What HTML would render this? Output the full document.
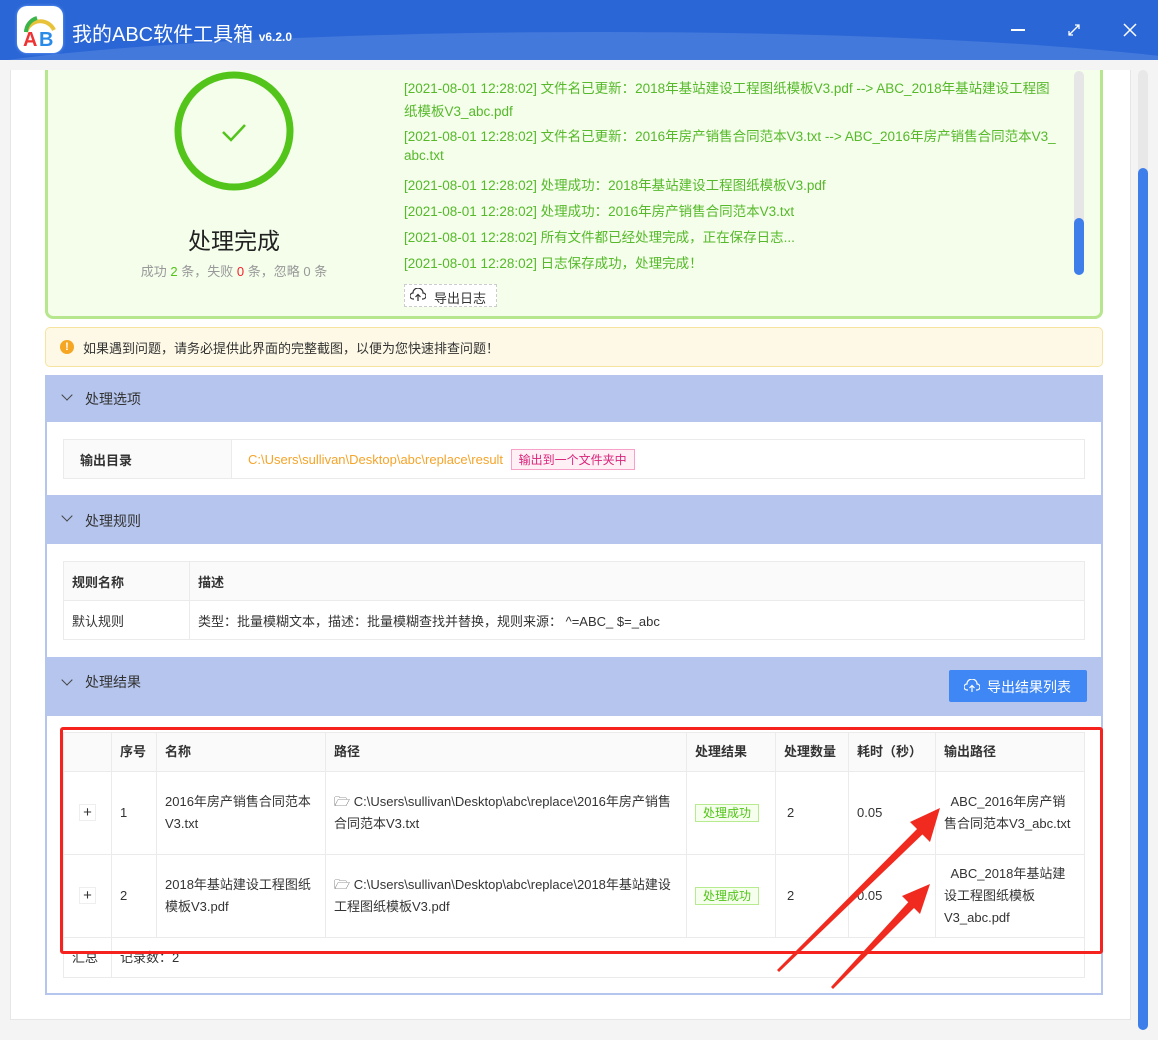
<!DOCTYPE html>
<html><head><meta charset="utf-8"><style>
*{box-sizing:border-box;margin:0;padding:0}
body{width:1158px;height:1040px;overflow:hidden;background:#f4f4f4;font-family:"Liberation Sans","Noto Sans CJK SC",sans-serif;font-size:13px;color:#333;position:relative}
.abs{position:absolute}
.title{left:0;top:0;width:1158px;height:60px;background:#2a66d5;overflow:hidden}
.title .wave{left:-100px;top:32px;width:1400px;height:120px;border-radius:50%;background:#4479dc}
.logo{left:17px;top:6px;width:46px;height:47px;border-radius:10px;background:#fff;box-shadow:0 0 3px #6aa0ff}
.main{left:10px;top:70px;width:1121px;height:950px;background:#fff;border:1px solid #e6e6e6;border-top:none}
.green{left:45px;top:70px;width:1058px;height:249px;background:#f4feeb;border:3px solid #b6e78e;border-top:none;border-radius:0 0 8px 8px}
.log{left:404px;color:#56b92a;font-size:13.5px;white-space:nowrap}
.sec{left:45px;width:1058px;background:#b5c5ee;color:#333;font-size:14px}
.sec span{position:absolute;left:40px}
.chev{position:absolute;left:18px;width:8px;height:8px;border-right:1.3px solid #444;border-bottom:1.3px solid #444;transform:rotate(45deg)}
table{border-collapse:collapse;position:absolute}
td,th{border:1px solid #ebebeb;text-align:left;font-size:13px;vertical-align:middle}
th{background:#fafafa;font-weight:bold;color:#333}
</style></head><body>
<div class="abs title"><div class="abs wave"></div>
<div class="abs logo"><svg width="46" height="47"><path d="M9 26 A15 15 0 0 1 37 24" stroke="#e8c33a" stroke-width="4" fill="none"/><path d="M9 26 A15 15 0 0 1 20 12" stroke="#3bb44a" stroke-width="4" fill="none"/><text x="6" y="40" font-size="20" font-weight="bold" fill="#e33" font-family="Liberation Sans">A</text><text x="22" y="40" font-size="20" font-weight="bold" fill="#2a8ae8" font-family="Liberation Sans">B</text></svg></div>
<div class="abs" style="left:72px;top:18px;color:#fff;font-size:20px">我的ABC软件工具箱 <span style="font-size:12px;font-weight:bold">v6.2.0</span></div>
<div class="abs" style="left:1011px;top:29px;width:14px;height:1.5px;background:#fff"></div>
<svg class="abs" style="left:1066px;top:22px" width="16" height="16"><path d="M3 13 L13 3 M9 3 H13 V7 M3 9 V13 H7" stroke="#fff" stroke-width="1.3" fill="none"/></svg>
<svg class="abs" style="left:1123px;top:23px" width="14" height="14"><path d="M1 1 L13 13 M13 1 L1 13" stroke="#fff" stroke-width="1.5"/></svg>
</div>
<div class="abs main"></div>
<div class="abs" style="left:1138px;top:70px;width:10px;height:960px;background:#e8e8e8;border-radius:5px"></div>
<div class="abs" style="left:1138px;top:168px;width:10px;height:862px;background:#3d7eea;border-radius:5px"></div>
<div class="abs green"></div>
<svg class="abs" style="left:172px;top:69px" width="124" height="124"><circle cx="62" cy="62" r="56" stroke="#52c41a" stroke-width="7" fill="none"/><path d="M51 63 L59 71 L73 56" stroke="#52c41a" stroke-width="2.5" fill="none"/></svg>
<div class="abs" style="left:134px;top:222px;width:200px;text-align:center;font-size:23px;color:#222">处理完成</div>
<div class="abs" style="left:134px;top:261px;width:200px;text-align:center;font-size:13px;color:#999">成功 <span style="color:#52c41a">2</span> 条，失败 <span style="color:#f5222d">0</span> 条，忽略 0 条</div>
<div class="abs log" style="top:77px">[2021-08-01 12:28:02] 文件名已更新：2018年基站建设工程图纸模板V3.pdf --&gt; ABC_2018年基站建设工程图</div>
<div class="abs log" style="top:100px">纸模板V3_abc.pdf</div>
<div class="abs log" style="top:125px">[2021-08-01 12:28:02] 文件名已更新：2016年房产销售合同范本V3.txt --&gt; ABC_2016年房产销售合同范本V3_</div>
<div class="abs log" style="top:148px">abc.txt</div>
<div class="abs log" style="top:174px">[2021-08-01 12:28:02] 处理成功：2018年基站建设工程图纸模板V3.pdf</div>
<div class="abs log" style="top:200px">[2021-08-01 12:28:02] 处理成功：2016年房产销售合同范本V3.txt</div>
<div class="abs log" style="top:226px">[2021-08-01 12:28:02] 所有文件都已经处理完成，正在保存日志...</div>
<div class="abs log" style="top:252px">[2021-08-01 12:28:02] 日志保存成功，处理完成！</div>
<div class="abs" style="left:1074px;top:71px;width:10px;height:204px;background:#e6e6e6;border-radius:5px"></div>
<div class="abs" style="left:1074px;top:218px;width:10px;height:57px;background:#3d7eea;border-radius:5px"></div>
<div class="abs" style="left:404px;top:284px;width:93px;height:23px;border:1px dashed #ccc;background:#fff;font-size:13px;padding:3px 0 0 29px;color:#333">导出日志</div>
<svg class="abs" style="left:410px;top:288px" width="16" height="14"><path d="M4 11 H3 A3 3 0 0 1 3 5 A5 5 0 0 1 13 5 A3 3 0 0 1 13 11 H12 M8 13 V7 M5.5 9 L8 6.5 L10.5 9" stroke="#333" stroke-width="1.2" fill="none"/></svg>
<div class="abs" style="left:45px;top:327px;width:1058px;height:40px;background:#fdf9e6;border:1px solid #f7e3a0;border-radius:5px"></div>
<div class="abs" style="left:60px;top:340px;width:14px;height:14px;border-radius:50%;background:#f5a623;color:#fff;font-size:11px;font-weight:bold;text-align:center;line-height:14px">!</div>
<div class="abs" style="left:83px;top:338px;font-size:13px;color:#333">如果遇到问题，请务必提供此界面的完整截图，以便为您快速排查问题！</div>
<div class="abs" style="left:45px;top:375px;width:1058px;height:620px;border:2px solid #b5c5ee;border-top:none;background:#fff"></div>
<div class="abs sec" style="top:375px;height:47px"><i class="chev" style="top:16px"></i><span style="top:14px">处理选项</span></div>
<table style="left:63px;top:439px;width:1022px;height:40px"><tr><th style="width:168px;background:#fafafa;padding-left:16px">输出目录</th><td style="padding-left:16px;color:#f5a42a">C:\Users\sullivan\Desktop\abc\replace\result <span style="display:inline-block;margin-left:4px;border:1px solid #f7a0c8;background:#fff0f6;color:#d9237a;font-size:12px;padding:1px 7px">输出到一个文件夹中</span></td></tr></table>
<div class="abs sec" style="top:495px;height:49px"><i class="chev" style="top:17px"></i><span style="top:16px">处理规则</span></div>
<table style="left:63px;top:561px;width:1022px;height:79px"><tr style="height:39px"><th style="width:126px;padding-left:8px">规则名称</th><th style="padding-left:8px">描述</th></tr><tr><td style="padding-left:8px">默认规则</td><td style="padding-left:8px">类型：批量模糊文本，描述：批量模糊查找并替换，规则来源： ^=ABC_ $=_abc</td></tr></table>
<div class="abs sec" style="top:657px;height:59px"><i class="chev" style="top:19px"></i><span style="top:15px">处理结果</span></div>
<div class="abs" style="left:949px;top:670px;width:138px;height:32px;background:#3f87f5;border-radius:2px;color:#fff;font-size:14px;padding:7px 0 0 38px">导出结果列表</div>
<svg class="abs" style="left:964px;top:679px" width="16" height="14"><path d="M4 11 H3 A3 3 0 0 1 3 5 A5 5 0 0 1 13 5 A3 3 0 0 1 13 11 H12 M8 13 V7 M5.5 9 L8 6.5 L10.5 9" stroke="#fff" stroke-width="1.2" fill="none"/></svg>
<table style="left:63px;top:732px;width:1022px;line-height:22px">
<tr style="height:39px"><th style="width:48px"></th><th style="width:45px;padding-left:8px">序号</th><th style="width:169px;padding-left:8px">名称</th><th style="width:361px;padding-left:8px">路径</th><th style="width:89px;padding-left:8px">处理结果</th><th style="width:73px;padding-left:8px">处理数量</th><th style="width:87px;padding-left:8px">耗时（秒）</th><th style="padding-left:8px">输出路径</th></tr>
<tr style="height:83px"><td style="text-align:center"><span style="display:inline-block;width:17px;height:17px;border:1px solid #eee;line-height:15px;font-size:15px">+</span></td><td style="padding-left:8px">1</td><td style="padding:0 8px">2016年房产销售合同范本V3.txt</td><td style="padding:0 8px">🗁 C:\Users\sullivan\Desktop\abc\replace\2016年房产销售合同范本V3.txt</td><td style="padding-left:8px"><span style="border:1px solid #b7eb8f;background:#f6ffed;color:#52c41a;font-size:12px;padding:1px 7px">处理成功</span></td><td style="padding-left:11px">2</td><td style="padding-left:8px">0.05</td><td style="padding:0 8px">&nbsp; ABC_2016年房产销售合同范本V3_abc.txt</td></tr>
<tr style="height:83px"><td style="text-align:center"><span style="display:inline-block;width:17px;height:17px;border:1px solid #eee;line-height:15px;font-size:15px">+</span></td><td style="padding-left:8px">2</td><td style="padding:0 8px">2018年基站建设工程图纸模板V3.pdf</td><td style="padding:0 8px">🗁 C:\Users\sullivan\Desktop\abc\replace\2018年基站建设工程图纸模板V3.pdf</td><td style="padding-left:8px"><span style="border:1px solid #b7eb8f;background:#f6ffed;color:#52c41a;font-size:12px;padding:1px 7px">处理成功</span></td><td style="padding-left:11px">2</td><td style="padding-left:8px">0.05</td><td style="padding:0 8px">&nbsp; ABC_2018年基站建设工程图纸模板V3_abc.pdf</td></tr>
<tr style="height:40px"><td style="padding-left:8px">汇总</td><td colspan="7" style="padding-left:8px">记录数：2</td></tr>
</table>
<div class="abs" style="left:60px;top:727px;width:1043px;height:227px;border:3px solid #f5221d;border-radius:3px"></div>
<svg class="abs" style="left:0;top:0;overflow:visible" width="10" height="10">
<polygon points="777,970 779,972 927,830 920,826" fill="#f02a1f"/><polygon points="940,808 910,822 930,842" fill="#f02a1f"/>
<polygon points="831,987 833,989 920,902 913,897" fill="#f02a1f"/><polygon points="930,884 902,896 920,914" fill="#f02a1f"/>
</svg>
</body></html>
